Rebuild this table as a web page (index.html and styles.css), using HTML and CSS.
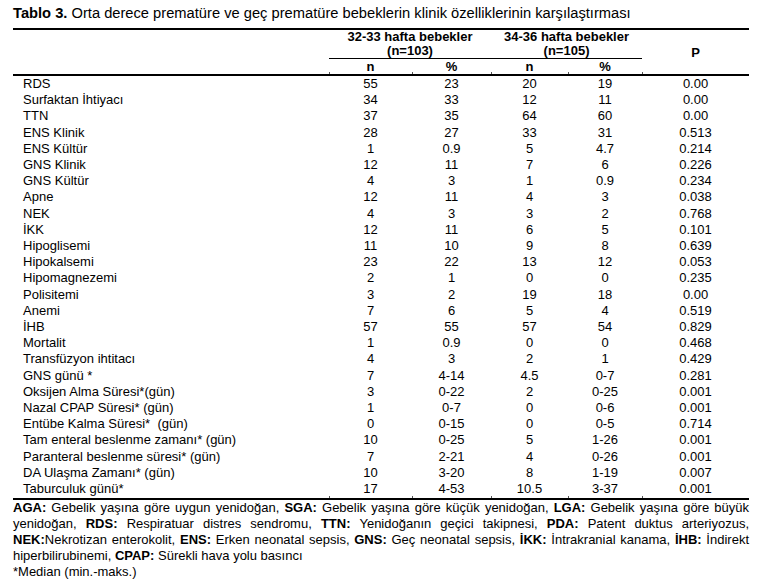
FILE: index.html
```html
<!DOCTYPE html>
<html lang="tr">
<head>
  <meta charset="UTF-8">
  <title>Tablo 3</title>
  <link rel="stylesheet" href="styles.css">
</head>
<body>

<div class="page">
  <h1 class="caption"><b>Tablo 3.</b> Orta derece prematüre ve geç prematüre bebeklerin klinik özelliklerinin karşılaştırması</h1>

  <table class="results">
    <colgroup>
      <col class="c-label">
      <col class="c-n1">
      <col class="c-p1">
      <col class="c-n2">
      <col class="c-p2">
      <col class="c-p">
    </colgroup>
    <thead>
      <tr class="head-top">
        <th rowspan="2" class="blank"></th>
        <th colspan="2" class="group">32-33 hafta bebekler<br>(n=103)</th>
        <th colspan="2" class="group">34-36 hafta bebekler<br>(n=105)</th>
        <th rowspan="2" class="pval tick">P</th>
      </tr>
      <tr class="head-sub">
        <th class="tick">n</th>
        <th class="tick">%</th>
        <th class="tick">n</th>
        <th class="tick">%</th>
      </tr>
    </thead>
    <tbody>
      <tr><td>RDS</td><td>55</td><td>23</td><td>20</td><td>19</td><td>0.00</td></tr>
      <tr><td>Surfaktan İhtiyacı</td><td>34</td><td>33</td><td>12</td><td>11</td><td>0.00</td></tr>
      <tr><td>TTN</td><td>37</td><td>35</td><td>64</td><td>60</td><td>0.00</td></tr>
      <tr><td>ENS Klinik</td><td>28</td><td>27</td><td>33</td><td>31</td><td>0.513</td></tr>
      <tr><td>ENS Kültür</td><td>1</td><td>0.9</td><td>5</td><td>4.7</td><td>0.214</td></tr>
      <tr><td>GNS Klinik</td><td>12</td><td>11</td><td>7</td><td>6</td><td>0.226</td></tr>
      <tr><td>GNS Kültür</td><td>4</td><td>3</td><td>1</td><td>0.9</td><td>0.234</td></tr>
      <tr><td>Apne</td><td>12</td><td>11</td><td>4</td><td>3</td><td>0.038</td></tr>
      <tr><td>NEK</td><td>4</td><td>3</td><td>3</td><td>2</td><td>0.768</td></tr>
      <tr><td>İKK</td><td>12</td><td>11</td><td>6</td><td>5</td><td>0.101</td></tr>
      <tr><td>Hipoglisemi</td><td>11</td><td>10</td><td>9</td><td>8</td><td>0.639</td></tr>
      <tr><td>Hipokalsemi</td><td>23</td><td>22</td><td>13</td><td>12</td><td>0.053</td></tr>
      <tr><td>Hipomagnezemi</td><td>2</td><td>1</td><td>0</td><td>0</td><td>0.235</td></tr>
      <tr><td>Polisitemi</td><td>3</td><td>2</td><td>19</td><td>18</td><td>0.00</td></tr>
      <tr><td>Anemi</td><td>7</td><td>6</td><td>5</td><td>4</td><td>0.519</td></tr>
      <tr><td>İHB</td><td>57</td><td>55</td><td>57</td><td>54</td><td>0.829</td></tr>
      <tr><td>Mortalit</td><td>1</td><td>0.9</td><td>0</td><td>0</td><td>0.468</td></tr>
      <tr><td>Transfüzyon ihtitacı</td><td>4</td><td>3</td><td>2</td><td>1</td><td>0.429</td></tr>
      <tr><td>GNS günü *</td><td>7</td><td>4-14</td><td>4.5</td><td>0-7</td><td>0.281</td></tr>
      <tr><td>Oksijen Alma Süresi*(gün)</td><td>3</td><td>0-22</td><td>2</td><td>0-25</td><td>0.001</td></tr>
      <tr><td>Nazal CPAP Süresi* (gün)</td><td>1</td><td>0-7</td><td>0</td><td>0-6</td><td>0.001</td></tr>
      <tr><td>Entübe Kalma Süresi*&nbsp; (gün)</td><td>0</td><td>0-15</td><td>0</td><td>0-5</td><td>0.714</td></tr>
      <tr><td>Tam enteral beslenme zamanı* (gün)</td><td>10</td><td>0-25</td><td>5</td><td>1-26</td><td>0.001</td></tr>
      <tr><td>Paranteral beslenme süresi* (gün)</td><td>7</td><td>2-21</td><td>4</td><td>0-26</td><td>0.001</td></tr>
      <tr><td>DA Ulaşma Zamanı* (gün)</td><td>10</td><td>3-20</td><td>8</td><td>1-19</td><td>0.007</td></tr>
      <tr class="last"><td>Taburculuk günü*</td><td class="tick">17</td><td class="tick">4-53</td><td class="tick">10.5</td><td class="tick">3-37</td><td class="tick">0.001</td></tr>
    </tbody>
  </table>

  <p class="notes"><b>AGA:</b> Gebelik yaşına göre uygun yenidoğan, <b>SGA:</b> Gebelik yaşına göre küçük yenidoğan, <b>LGA:</b> Gebelik yaşına göre büyük yenidoğan, <b>RDS:</b> Respiratuar distres sendromu, <b>TTN:</b> Yenidoğanın geçici takipnesi, <b>PDA:</b> Patent duktus arteriyozus, <b>NEK:</b>Nekrotizan enterokolit, <b>ENS:</b> Erken neonatal sepsis, <b>GNS:</b> Geç neonatal sepsis, <b>İKK:</b> İntrakranial kanama, <b>İHB:</b> İndirekt hiperbilirubinemi, <b>CPAP:</b> Sürekli hava yolu basıncı</p>
  <p class="median">*Median (min.-maks.)</p>
</div>

</body>
</html>
```

FILE: styles.css
```css
body {
  margin: 0;
  background: #fff;
  color: #000;
  font-family: "Liberation Sans", Arial, sans-serif;
  font-size: 13px;
}
.page {
  width: 736px;
  padding: 0 0 0 13px;
}
.caption {
  margin: 0;
  padding-top: 4px;
  height: 24px;
  font-size: 14.7px;
  font-weight: normal;
  line-height: 18px;
  white-space: nowrap;
}
.results {
  width: 736px;
  border-collapse: separate;
  border-spacing: 0;
  table-layout: fixed;
}
.c-label { width: 316px; }
.c-n1 { width: 83px; }
.c-p1 { width: 79px; }
.c-n2 { width: 77px; }
.c-p2 { width: 74px; }
.c-p { width: 107px; }

.results th, .results td {
  padding: 0;
  text-align: center;
  position: relative;
}
.results th {
  font-weight: bold;
}
.head-top th {
  border-top: 2px solid #000;
}
.head-top .group {
  line-height: 14px;
  border-bottom: 1px solid #000;
  vertical-align: top;
}
.head-top .blank,
.head-top .pval,
.head-sub th {
  border-bottom: 2px solid #000;
}
.head-sub th {
  line-height: 15px;
}
.pval {
  vertical-align: middle;
}
.results td {
  line-height: 16.2px;
  white-space: nowrap;
}
.results td:first-child {
  text-align: left;
  padding-left: 10px;
}
.results tr.last td {
  border-bottom: 2px solid #000;
  padding-bottom: 1px;
}
/* small cell-border marks at the column edges */
.tick::before {
  content: "";
  position: absolute;
  left: 0;
  bottom: 0;
  width: 1px;
  height: 2px;
  background: #555;
}
.notes {
  margin: 0;
  line-height: 16px;
  text-align: justify;
}
.median {
  margin: 0;
  line-height: 16px;
}
```
